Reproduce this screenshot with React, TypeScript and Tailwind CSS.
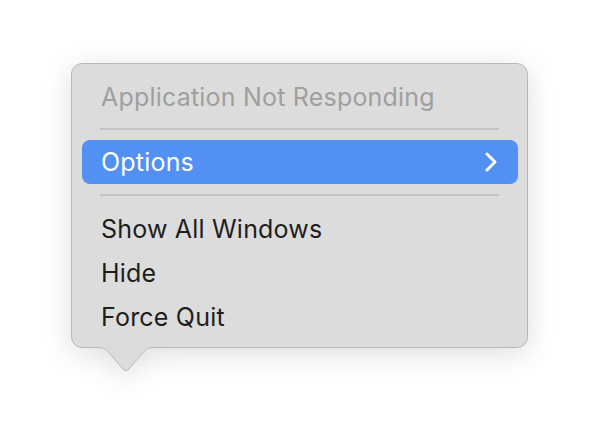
import React from "react";

function Row({ label }: { label: string }) {
  return (
    <div className="h-[44px] mx-[11px] pl-[18px] flex items-center text-[#1e1e1e]">{label}</div>
  );
}

export default function App() {
  return (
    <div className="w-[600px] h-[428px] bg-white pt-[63px] pl-[71px]" style={{ fontFamily: "Inter, 'Noto Sans', sans-serif" }}>
      <div className="relative w-[457px] drop-shadow-[0_6px_14px_rgba(0,0,0,0.13)]">
        <div className="w-[457px] h-[285px] rounded-[11px] border border-[#b8b8b8] bg-[#dddcdd] pt-[11px] text-[25px] leading-[30px] tracking-[0.2px]">
          <div className="h-[44px] mx-[11px] pl-[18px] flex items-center text-[#9f9f9f]">Application Not Responding</div>
          <div className="mx-[28px] mt-[9px] mb-[10px] h-[2px] bg-[#c5c4c5]" />
          <div className="h-[44px] ml-[10px] mr-[9px] pl-[19px] pr-[20px] flex items-center justify-between rounded-[8px] bg-[#5290f3] text-white">
            <span>Options</span>
            <svg width="14" height="22" viewBox="0 0 14 22" fill="none">
              <polyline points="3,3 11,11 3,19" stroke="white" strokeWidth="3" strokeLinecap="round" strokeLinejoin="round" />
            </svg>
          </div>
          <div className="mx-[28px] mt-[10px] mb-[11px] h-[2px] bg-[#c5c4c5]" />
          <Row label="Show All Windows" />
          <Row label="Hide" />
          <Row label="Force Quit" />
        </div>
        <svg className="absolute left-[27px] top-[283px]" width="56" height="28" viewBox="0 0 56 28" fill="none">
          <path d="M0,0 H56 V1.5 C50,1.5 48,3.5 45,6.5 L31,23 Q28,26.5 25,23 L11,6.5 C8,3.5 6,1.5 0,1.5 Z" fill="#dddcdd" />
          <path d="M0,1.5 C6,1.5 8,3.5 11,6.5 L25,23 Q28,26.5 31,23 L45,6.5 C48,3.5 50,1.5 56,1.5" stroke="#b8b8b8" strokeWidth="1" />
        </svg>
      </div>
    </div>
  );
}
